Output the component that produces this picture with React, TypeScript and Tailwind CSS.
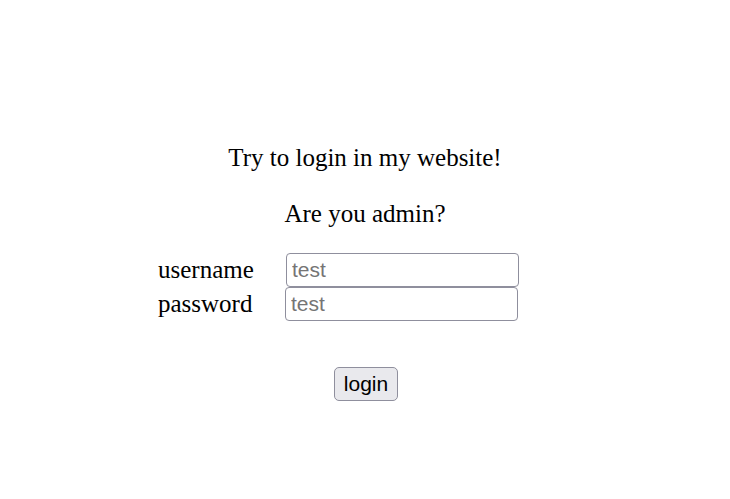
export default function App() {
  return (
    <main className="min-h-screen w-full bg-white text-black" style={{ fontFamily: '"Liberation Serif", "Times New Roman", serif' }}>
      <div className="flex flex-col pt-[143px]">
        <p className="text-center text-[25px] leading-[29px]">Try to login in my website!</p>
        <p className="mt-[27px] text-center text-[25px] leading-[29px]">Are you admin?</p>

        <form className="mt-[25px] pl-[158px]" onSubmit={(e) => e.preventDefault()}>
          <div className="grid grid-cols-[127px_233px] text-[25px]">
            <label className="flex h-[34px] items-center">username</label>
            <input
              placeholder="test"
              className="ml-px h-[34px] w-[233px] rounded-[4px] border border-[#8f8f9d] px-[5px] text-[21px] text-black outline-none placeholder:text-[#757575]"
              style={{ fontFamily: '"Liberation Sans", Arial, sans-serif' }}
            />
            <label className="flex h-[34px] items-center">password</label>
            <input
              type="password"
              placeholder="test"
              className="h-[34px] w-[233px] rounded-[4px] border border-[#8f8f9d] px-[5px] text-[21px] text-black outline-none placeholder:text-[#757575]"
              style={{ fontFamily: '"Liberation Sans", Arial, sans-serif' }}
            />
          </div>
        </form>

        <div className="mt-[46px] flex justify-center pl-[2px]">
          <button
            className="h-[34px] w-[64px] rounded-[5px] border border-[#8f8f9d] bg-[#e9e9ed] text-[21px] text-black"
            style={{ fontFamily: '"Liberation Sans", Arial, sans-serif' }}
          >
            login
          </button>
        </div>
      </div>
    </main>
  );
}
